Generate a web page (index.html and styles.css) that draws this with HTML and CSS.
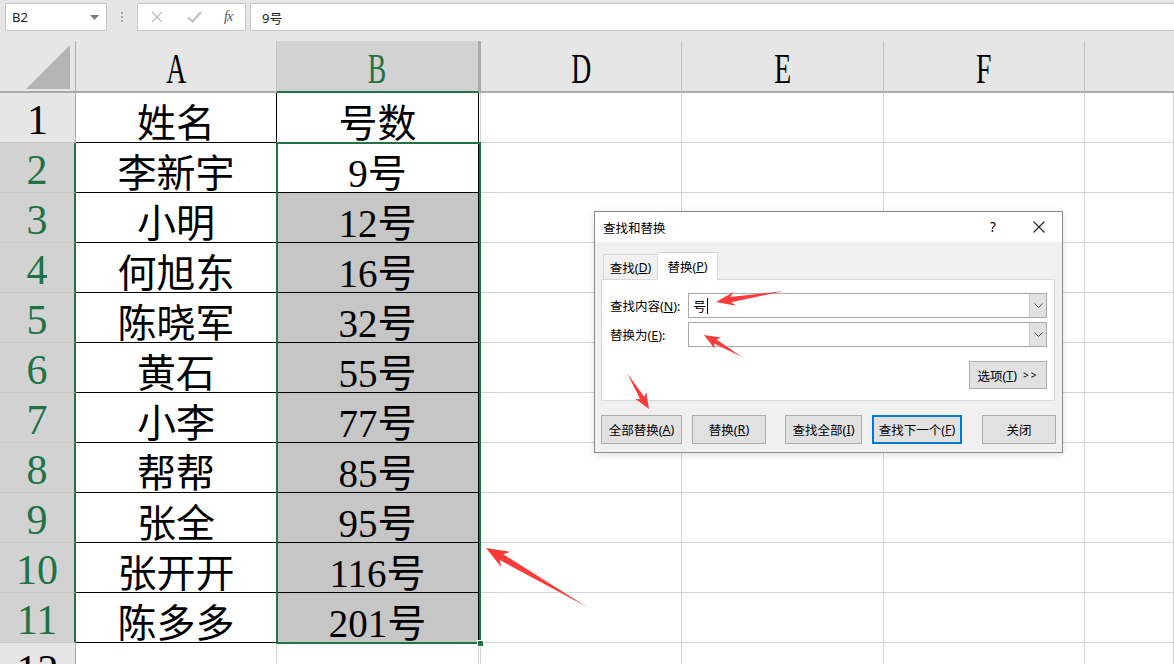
FILE: index.html
```html
<!DOCTYPE html>
<html lang="zh-CN">
<head>
<meta charset="utf-8">
<title>查找和替换</title>
<link rel="stylesheet" href="styles.css">
</head>
<body>
<div class="app">
  <div class="fbar">
    <div class="namebox"><span class="nbtext">B2</span><svg class="nbdd" width="9" height="5" viewBox="0 0 9 5"><path d="M0 0h9L4.5 5z" fill="#7a7a7a"/></svg></div>
    <div class="dots"><i></i><i></i><i></i></div>
    <div class="fbtns">
      <svg class="fx-x" width="12" height="12" viewBox="0 0 12 12"><path d="M1 1l10 10M11 1L1 11" stroke="#bdbdbd" stroke-width="1.3" fill="none"/></svg>
      <svg class="fx-ok" width="15" height="12" viewBox="0 0 15 12"><path d="M1 6.5l4.5 4L14 1" stroke="#bdbdbd" stroke-width="2" fill="none"/></svg>
      <span class="fx-fx">fx</span>
    </div>
    <div class="finput">9号</div>
  </div>

  <div class="sheet">
    <div class="corner"><svg width="46" height="46" viewBox="0 0 46 46"><path d="M44 2V46H0z" fill="#b4b4b4"/></svg></div>
    <div class="ch"><span class="lt">A</span></div>
    <div class="ch on"><span class="lt">B</span></div>
    <div class="ch hid"></div>
    <div class="ch"><span class="lt">D</span></div>
    <div class="ch"><span class="lt">E</span></div>
    <div class="ch"><span class="lt">F</span></div>
    <div class="ch last"></div>

    <div class="rh">1</div><div class="c t">姓名</div><div class="c t">号数</div><div class="c h"></div><div class="c"></div><div class="c"></div><div class="c"></div><div class="c"></div>
    <div class="rh on">2</div><div class="c t">李新宇</div><div class="c t">9号</div><div class="c h"></div><div class="c"></div><div class="c"></div><div class="c"></div><div class="c"></div>
    <div class="rh on">3</div><div class="c t">小明</div><div class="c t hl">12号</div><div class="c h"></div><div class="c"></div><div class="c"></div><div class="c"></div><div class="c"></div>
    <div class="rh on">4</div><div class="c t">何旭东</div><div class="c t hl">16号</div><div class="c h"></div><div class="c"></div><div class="c"></div><div class="c"></div><div class="c"></div>
    <div class="rh on">5</div><div class="c t">陈晓军</div><div class="c t hl">32号</div><div class="c h"></div><div class="c"></div><div class="c"></div><div class="c"></div><div class="c"></div>
    <div class="rh on">6</div><div class="c t">黄石</div><div class="c t hl">55号</div><div class="c h"></div><div class="c"></div><div class="c"></div><div class="c"></div><div class="c"></div>
    <div class="rh on">7</div><div class="c t">小李</div><div class="c t hl">77号</div><div class="c h"></div><div class="c"></div><div class="c"></div><div class="c"></div><div class="c"></div>
    <div class="rh on">8</div><div class="c t">帮帮</div><div class="c t hl">85号</div><div class="c h"></div><div class="c"></div><div class="c"></div><div class="c"></div><div class="c"></div>
    <div class="rh on">9</div><div class="c t">张全</div><div class="c t hl">95号</div><div class="c h"></div><div class="c"></div><div class="c"></div><div class="c"></div><div class="c"></div>
    <div class="rh on">10</div><div class="c t">张开开</div><div class="c t hl">116号</div><div class="c h"></div><div class="c"></div><div class="c"></div><div class="c"></div><div class="c"></div>
    <div class="rh on">11</div><div class="c t">陈多多</div><div class="c t hl">201号</div><div class="c h"></div><div class="c"></div><div class="c"></div><div class="c"></div><div class="c"></div>
    <div class="rh">12</div><div class="c"></div><div class="c"></div><div class="c h"></div><div class="c"></div><div class="c"></div><div class="c"></div><div class="c"></div>

    <div class="selbox"><i class="handle"></i></div>
  </div>

  <div class="dialog">
    <div class="dtitle">
      <span class="dtext">查找和替换</span>
      <span class="tbtn q">?</span>
      <span class="tbtn"><svg width="12" height="12" viewBox="0 0 12 12"><path d="M0.5 0.5l11 11M11.5 0.5l-11 11" stroke="#222" stroke-width="1.1" fill="none"/></svg></span>
    </div>
    <div class="dbody">
      <div class="tabs">
        <div class="tab">查找(<u>D</u>)</div>
        <div class="tab on">替换(<u>P</u>)</div>
      </div>
      <div class="panel">
        <div class="frow">
          <span class="flabel">查找内容(<u>N</u>):</span>
          <div class="combo"><span class="val">号</span><i class="caret"></i><span class="ddb"><svg width="9" height="5" viewBox="0 0 9 5"><path d="M0.5 0.5L4.5 4.5L8.5 0.5" stroke="#555" fill="none"/></svg></span></div>
        </div>
        <div class="frow r2">
          <span class="flabel">替换为(<u>E</u>):</span>
          <div class="combo"><span class="val"></span><span class="ddb"><svg width="9" height="5" viewBox="0 0 9 5"><path d="M0.5 0.5L4.5 4.5L8.5 0.5" stroke="#555" fill="none"/></svg></span></div>
        </div>
        <div class="optrow"><span class="btn opt">选项(<u>T</u>) <span class="gg">&gt;&gt;</span></span></div>
      </div>
      <div class="btnrow">
        <span class="btn b1">全部替换(<u>A</u>)</span>
        <span class="btn b2">替换(<u>R</u>)</span>
        <span class="btn b3">查找全部(<u>I</u>)</span>
        <span class="btn b4 def">查找下一个(<u>F</u>)</span>
        <span class="btn b5">关闭</span>
      </div>
    </div>
  </div>

  <svg class="arrows" width="1174" height="664" viewBox="0 0 1174 664">
    <g fill="#fb3a3a">
      <polygon points="0,0 -19,7 -15,2.6 -69,0 -15,-2.6 -19,-7" transform="translate(716,302) rotate(170.8)"/>
      <polygon points="0,0 -16,6.5 -13,2.4 -44,0 -13,-2.4 -16,-6.5" transform="translate(704,335) rotate(-149.9)"/>
      <polygon points="0,0 -16,6.5 -13,2.4 -42,0 -13,-2.4 -16,-6.5" transform="translate(649,409) rotate(58.6)"/>
      <polygon points="0,0 -23,9 -18,3.4 -117,0 -18,-3.4 -23,-9" transform="translate(486,548) rotate(-149.7)"/>
    </g>
  </svg>
</div>
</body>
</html>
```

FILE: styles.css
```css
* { box-sizing: border-box; }
html, body { margin: 0; padding: 0; }
body { background: #fff; font-family: "Noto Sans", "Noto Sans CJK SC", sans-serif; }

.app { position: relative; width: 1174px; height: 664px; overflow: hidden; background: #e6e6e6; }

/* formula bar */
.fbar { display: flex; align-items: flex-start; height: 41px; padding-top: 3px; background: #e6e6e6; }
.namebox { margin-left: 5px; width: 102px; height: 28px; background: #fff; border: 1px solid #c6c6c6; display: flex; align-items: center; justify-content: space-between; padding: 0 6px 0 6px; font-size: 13px; color: #222; }
.nbdd { margin-right: 1px; }
.dots { width: 30px; height: 28px; display: flex; flex-direction: column; align-items: center; justify-content: center; gap: 2px; }
.dots i { display: block; width: 2px; height: 2px; background: #a6a6a6; }
.fbtns { width: 109px; height: 28px; background: #fff; border: 1px solid #c6c6c6; display: flex; align-items: center; padding-left: 13px; }
.fx-x { margin-right: 24px; }
.fx-ok { margin-right: 22px; }
.fx-fx { font-family: "Liberation Serif", serif; font-style: italic; font-size: 14px; color: #555; letter-spacing: -1px; }
.finput { margin-left: 4px; flex: 1; height: 28px; background: #fff; border: 1px solid #c6c6c6; border-right: none; display: flex; align-items: center; padding-left: 11px; font-size: 13px; color: #222; }

/* sheet grid */
.sheet { position: relative; display: grid; grid-template-columns: 76px 201px 202px 2px 201px 202px 201px 1fr; grid-template-rows: 52px repeat(12, 50px); background: #fff; font-family: "Liberation Serif", "Noto Sans CJK SC", serif; }
.corner { background: #e6e6e6; border-right: 1px solid #ababab; border-bottom: 2px solid #ababab; display: flex; align-items: flex-end; justify-content: flex-end; padding: 0 3px 2px 0; }
.ch { background: #e6e6e6; border-right: 1px solid #c4c4c4; border-bottom: 2px solid #ababab; display: flex; align-items: center; justify-content: center; font-size: 42px; color: #000; padding-top: 6px; }
.ch.on { background: #d2d2d2; color: #217346; border-bottom-color: #217346; border-right-color: #ababab; }
.ch.hid { border-right: 1px solid #ababab; border-left: 1px solid #ababab; }
.ch.last { border-right: none; }
.lt { display: inline-block; transform: scaleX(0.66); }

.rh { background: #e6e6e6; border-right: 1px solid #ababab; border-bottom: 1px solid #c8c8c8; display: flex; align-items: center; justify-content: center; font-size: 42px; color: #000; padding-top: 5px; }
.rh.on { background: #d2d2d2; color: #217346; border-right: 2px solid #217346; }

.c { background: #fff; border-right: 1px solid #d4d4d4; border-bottom: 1px solid #d4d4d4; display: flex; align-items: center; justify-content: center; font-size: 39px; color: #000; padding-top: 5px; }
.c.t { border-right-color: #000; border-bottom-color: #000; }
.c.hl { background: #c6c6c6; }

/* selection outline over B2:B11 */
.selbox { position: absolute; left: 276px; top: 101px; width: 205px; height: 502px; border: 2px solid #217346; }
.handle { position: absolute; right: -5px; bottom: -5px; width: 7px; height: 7px; background: #217346; border: 1px solid #fff; }

/* dialog */
.dialog { position: absolute; left: 594px; top: 211px; width: 469px; height: 242px; border: 1px solid #8a8a8a; background: #f0f0f0; font-family: "Noto Sans", "Noto Sans CJK SC", sans-serif; font-size: 12px; color: #000; box-shadow: 0 2px 8px rgba(0,0,0,0.12); }
.dialog u { text-decoration: underline; text-underline-offset: 1px; }
.dtitle { height: 30px; background: #fff; display: flex; align-items: center; padding-left: 8px; }
.dtext { flex: 1; font-size: 12.5px; }
.tbtn { width: 46px; height: 30px; display: flex; align-items: center; justify-content: center; font-size: 14px; }
.tbtn.q { font-size: 13.5px; }
.dbody { padding: 9px 0 0 6px; }
.tabs { display: flex; align-items: flex-end; height: 28px; padding-left: 2px; position: relative; z-index: 1; }
.tab { height: 25px; width: 55px; border: 1px solid #d9d9d9; border-bottom: none; background: #f0f0f0; display: flex; align-items: center; justify-content: center; font-size: 12.5px; }
.tab.on { height: 28px; width: 60px; background: #fff; border-left: none; margin-bottom: -1px; }
.panel { width: 454px; height: 122px; background: #fff; border: 1px solid #d9d9d9; padding: 13px 7px 0 8px; }
.frow { display: flex; align-items: center; height: 25px; }
.frow.r2 { margin-top: 4px; }
.flabel { width: 78px; font-size: 12.5px; }
.combo { flex: 1; height: 25px; border: 1px solid #a8a8a8; background: #fff; display: flex; align-items: center; padding-left: 4px; }
.val { font-size: 13px; }
.caret { display: block; width: 1px; height: 16px; background: #000; margin-left: 1px; }
.combo .ddb { margin-left: auto; width: 17px; height: 23px; background: #e1e1e1; border-left: 1px solid #c8c8c8; display: flex; align-items: center; justify-content: center; }
.optrow { display: flex; justify-content: flex-end; margin-top: 14px; }
.btn { height: 29px; background: #e1e1e1; border: 1px solid #adadad; display: flex; align-items: center; justify-content: center; font-size: 12.5px; }
.btn.opt { width: 78px; height: 28px; }
.gg { margin-left: 6px; font-size: 10px; letter-spacing: 2px; }
.btnrow { display: flex; margin-top: 14px; }
.b1 { width: 81px; }
.b2 { width: 74px; margin-left: 10px; }
.b3 { width: 77px; margin-left: 19px; }
.b4 { width: 90px; margin-left: 10px; }
.b5 { width: 74px; margin-left: 20px; }
.btn.def { border: 2px solid #0078d7; }

.arrows { position: absolute; left: 0; top: 0; pointer-events: none; }
```
